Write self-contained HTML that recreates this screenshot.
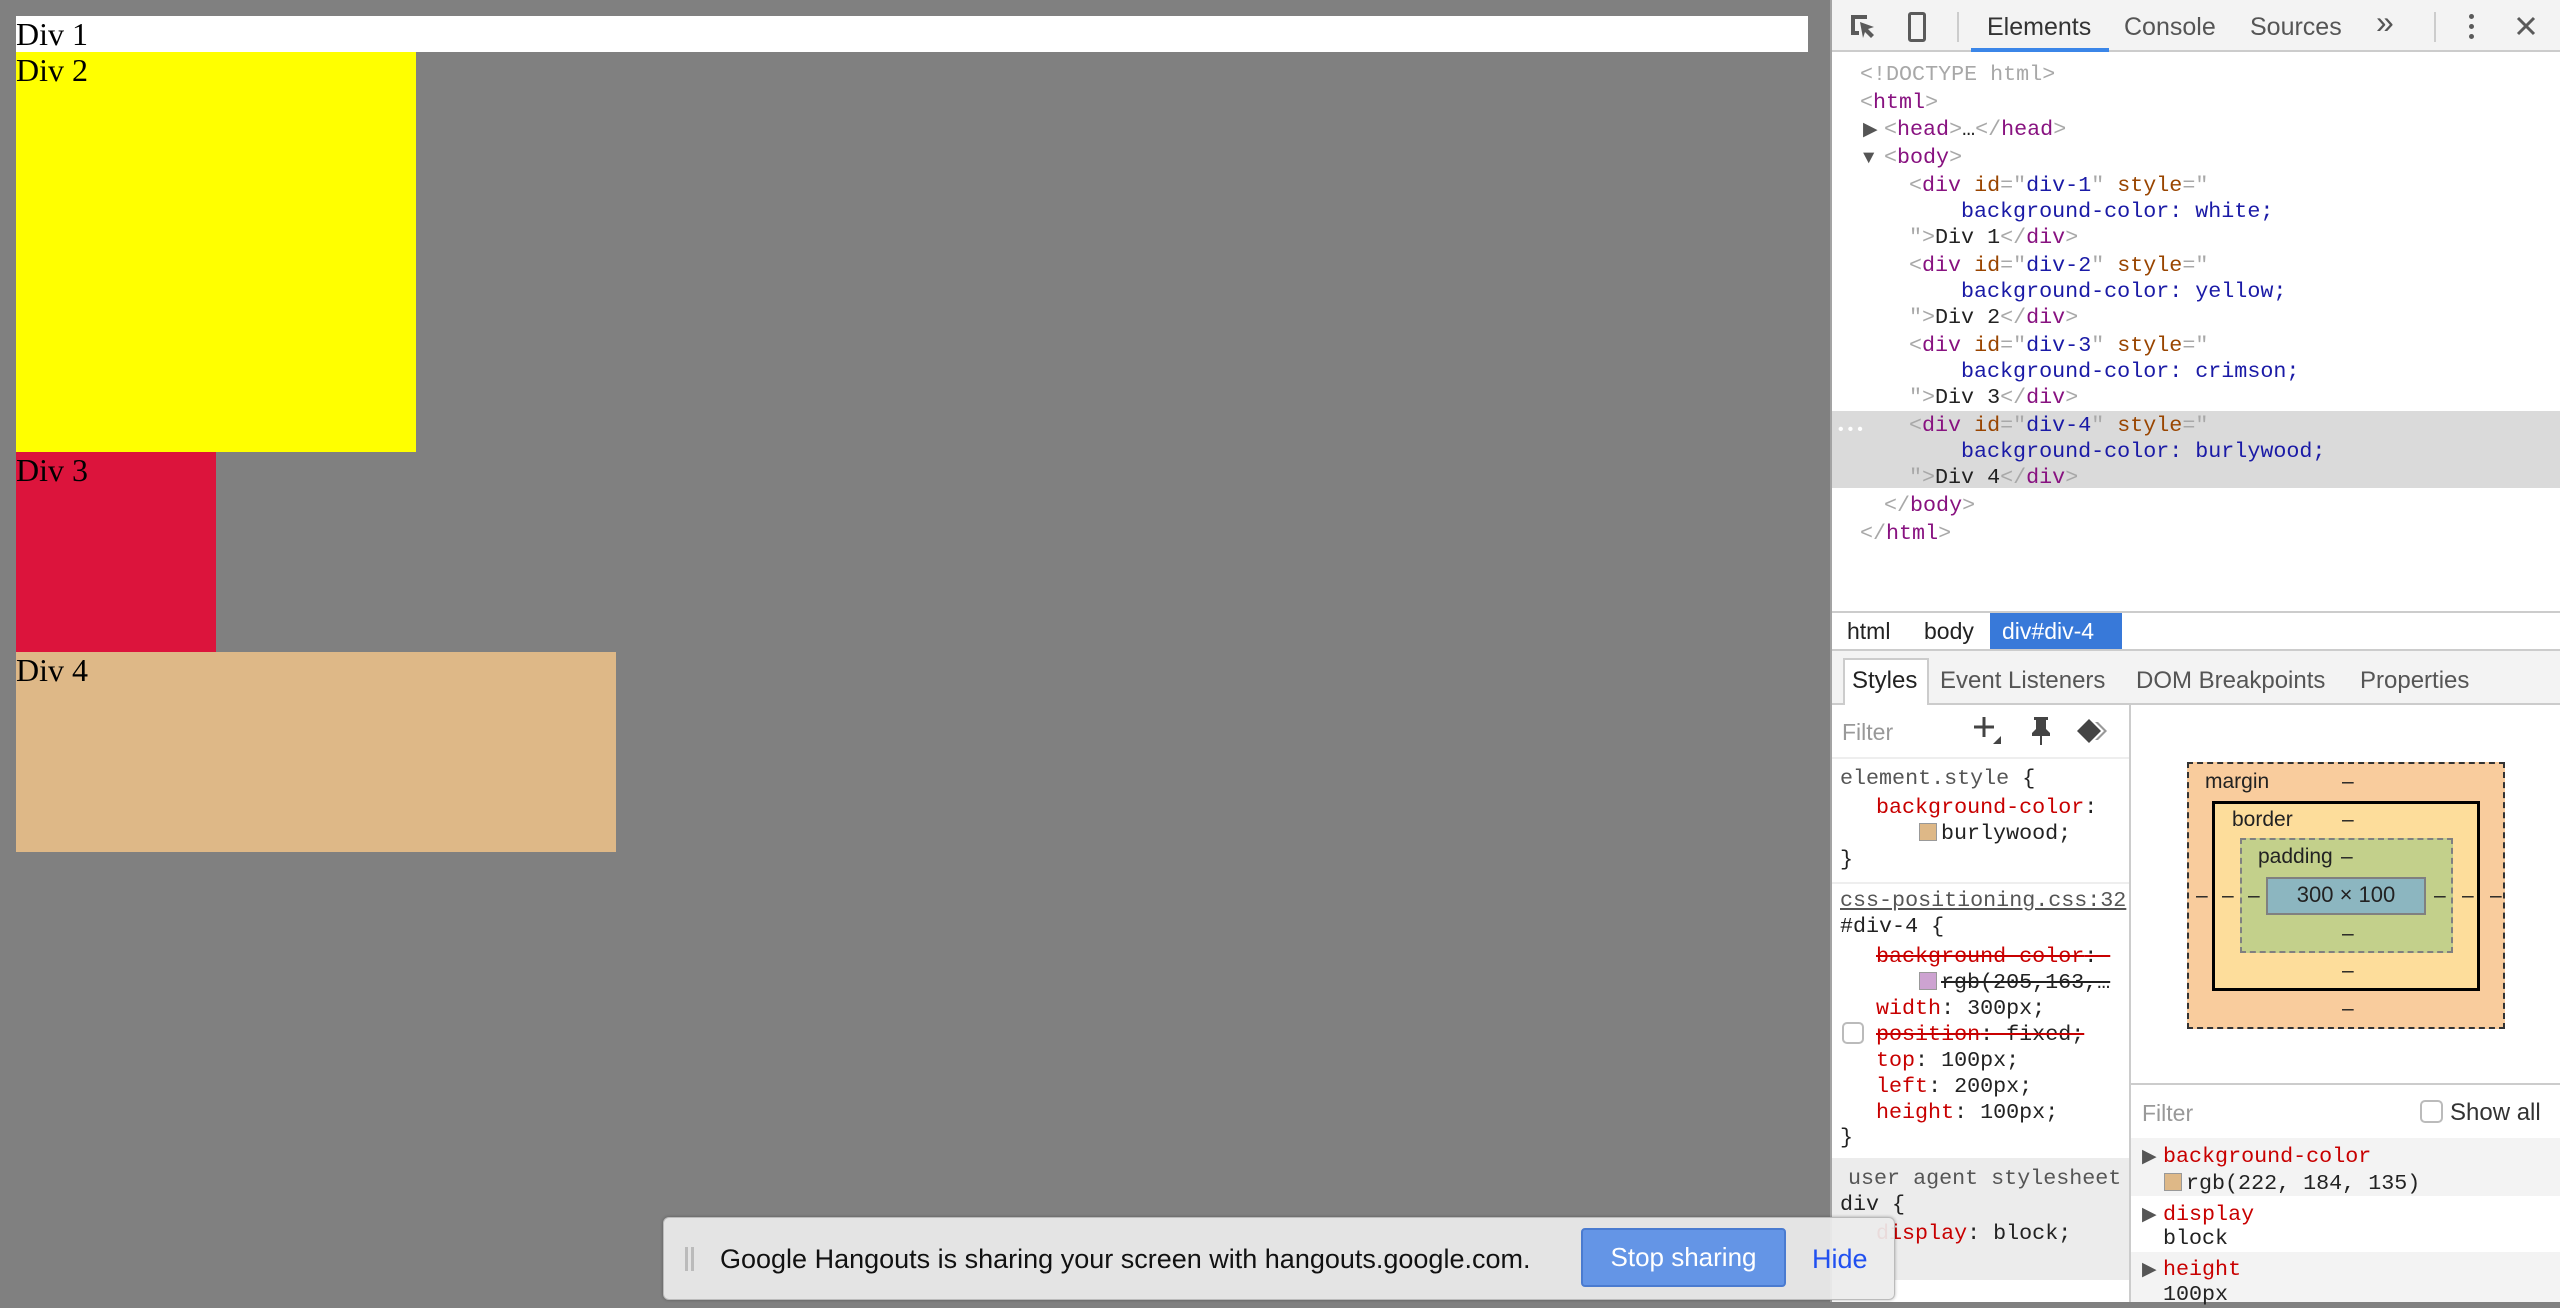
<!DOCTYPE html>
<html><head><style>
*{margin:0;padding:0;box-sizing:border-box}
body{width:2560px;height:1302px;overflow:hidden;background:#808080;position:relative;font-family:"Liberation Sans",sans-serif}
.a{position:absolute;white-space:pre}
.pg{font-family:"Liberation Serif",serif;font-size:32px;line-height:36px;color:#000}
.m{font-family:"Liberation Mono",monospace;font-size:21.7px;line-height:26px;margin-top:3px}
.tg{color:#881280}.at{color:#994500}.av{color:#1a1aa6}.br{color:#a8a8a8}.tx{color:#222}
.pr{color:#c80000}.vl{color:#222}
.s{text-decoration:line-through}
.sw{display:inline-block;width:18px;height:18px;border:1px solid #999;vertical-align:-2px;margin-right:4px}
.ui{font-size:23px;line-height:28px}
.tri{font-size:19px!important}
</style></head><body>
<div class="a pg" style="left:16px;top:16px;width:1792px;height:36px;background:#fff">Div 1</div>
<div class="a pg" style="left:16px;top:52px;width:400px;height:400px;background:#ff0">Div 2</div>
<div class="a pg" style="left:16px;top:452px;width:200px;height:200px;background:#dc143c">Div 3</div>
<div class="a pg" style="left:16px;top:652px;width:600px;height:200px;background:#deb887">Div 4</div>

<div class="a" style="left:1830px;top:0;width:730px;height:1302px;background:#fff;border-left:2px solid #a3a3a3"></div>
<div class="a" style="left:1832px;top:0;width:728px;height:52px;background:#f3f3f3;border-bottom:2px solid #ccc"></div>
<svg class="a" style="left:1848px;top:12px" width="30" height="30" viewBox="0 0 30 30"><path d="M3 3h16v4H7v12h4v4H3z" fill="#5a5a5a"/><path d="M12 10l14 5-6 2 6 6-3 3-6-6-2 6z" fill="#5a5a5a"/></svg>
<div class="a" style="left:1908px;top:12px;width:18px;height:30px;border:3px solid #5a5a5a;border-radius:3px"></div>
<div class="a" style="left:1957px;top:12px;width:2px;height:30px;background:#ccc"></div>
<div class="a ui" style="left:1987px;top:13px;font-size:25px;color:#333">Elements</div>
<div class="a" style="left:1971px;top:48px;width:138px;height:4px;background:#3b86e8"></div>
<div class="a ui" style="left:2124px;top:13px;font-size:25px;color:#555">Console</div>
<div class="a ui" style="left:2250px;top:13px;font-size:25px;color:#555">Sources</div>
<div class="a ui" style="left:2376px;top:8px;font-size:32px;color:#555">»</div>
<div class="a" style="left:2434px;top:12px;width:2px;height:30px;background:#ccc"></div>
<div class="a" style="left:2469px;top:14px;width:5px;height:5px;border-radius:3px;background:#5a5a5a;box-shadow:0 10px 0 #5a5a5a,0 20px 0 #5a5a5a"></div>
<svg class="a" style="left:2516px;top:16px" width="20" height="20" viewBox="0 0 20 20"><path d="M2 2L18 18M18 2L2 18" stroke="#5a5a5a" stroke-width="3"/></svg>

<div class="a" style="left:1832px;top:411px;width:728px;height:77px;background:#dadada"></div>
<div class="a m" style="left:1836px;top:414px;color:#fff;font-size:16px">•••</div>
<div class="a m br" style="left:1860px;top:59px">&lt;!DOCTYPE html&gt;</div>
<div class="a m" style="left:1860px;top:87px"><span class="br">&lt;</span><span class="tg">html</span><span class="br">&gt;</span></div>
<div class="a m tri" style="left:1863px;top:114px;color:#555">▶</div>
<div class="a m" style="left:1884px;top:114px"><span class="br">&lt;</span><span class="tg">head</span><span class="br">&gt;</span><span class="tx">…</span><span class="br">&lt;/</span><span class="tg">head</span><span class="br">&gt;</span></div>
<div class="a m tri" style="left:1863px;top:142px;color:#555">▼</div>
<div class="a m" style="left:1884px;top:142px"><span class="br">&lt;</span><span class="tg">body</span><span class="br">&gt;</span></div>

<div class="a m" style="left:1909px;top:170px"><span class="br">&lt;</span><span class="tg">div</span> <span class="at">id</span><span class="br">="</span><span class="av">div-1</span><span class="br">"</span> <span class="at">style</span><span class="br">="</span></div>
<div class="a m av" style="left:1961px;top:196px">background-color: white;</div>
<div class="a m" style="left:1909px;top:222px"><span class="br">"&gt;</span><span class="tx">Div 1</span><span class="br">&lt;/</span><span class="tg">div</span><span class="br">&gt;</span></div>
<div class="a m" style="left:1909px;top:250px"><span class="br">&lt;</span><span class="tg">div</span> <span class="at">id</span><span class="br">="</span><span class="av">div-2</span><span class="br">"</span> <span class="at">style</span><span class="br">="</span></div>
<div class="a m av" style="left:1961px;top:276px">background-color: yellow;</div>
<div class="a m" style="left:1909px;top:302px"><span class="br">"&gt;</span><span class="tx">Div 2</span><span class="br">&lt;/</span><span class="tg">div</span><span class="br">&gt;</span></div>
<div class="a m" style="left:1909px;top:330px"><span class="br">&lt;</span><span class="tg">div</span> <span class="at">id</span><span class="br">="</span><span class="av">div-3</span><span class="br">"</span> <span class="at">style</span><span class="br">="</span></div>
<div class="a m av" style="left:1961px;top:356px">background-color: crimson;</div>
<div class="a m" style="left:1909px;top:382px"><span class="br">"&gt;</span><span class="tx">Div 3</span><span class="br">&lt;/</span><span class="tg">div</span><span class="br">&gt;</span></div>
<div class="a m" style="left:1909px;top:410px"><span class="br">&lt;</span><span class="tg">div</span> <span class="at">id</span><span class="br">="</span><span class="av">div-4</span><span class="br">"</span> <span class="at">style</span><span class="br">="</span></div>
<div class="a m av" style="left:1961px;top:436px">background-color: burlywood;</div>
<div class="a m" style="left:1909px;top:462px"><span class="br">"&gt;</span><span class="tx">Div 4</span><span class="br">&lt;/</span><span class="tg">div</span><span class="br">&gt;</span></div>
<div class="a m" style="left:1884px;top:490px"><span class="br">&lt;/</span><span class="tg">body</span><span class="br">&gt;</span></div>
<div class="a m" style="left:1860px;top:518px"><span class="br">&lt;/</span><span class="tg">html</span><span class="br">&gt;</span></div>

<div class="a" style="left:1832px;top:611px;width:728px;height:40px;border-top:2px solid #ccc;border-bottom:2px solid #ccc;background:#fff"></div>
<div class="a ui" style="left:1847px;top:617px;color:#222">html</div>
<div class="a ui" style="left:1924px;top:617px;color:#222">body</div>
<div class="a ui" style="left:1990px;top:613px;width:132px;height:36px;background:#3879d9;color:#fff;padding:4px 0 0 12px">div#div-4</div>
<div class="a" style="left:1832px;top:651px;width:728px;height:54px;background:#f3f3f3;border-bottom:2px solid #ccc"></div>
<div class="a" style="left:1843px;top:658px;width:86px;height:47px;background:#fff;border:2px solid #ccc;border-bottom:none"></div>
<div class="a ui" style="left:1852px;top:667px;font-size:24px;color:#222">Styles</div>
<div class="a ui" style="left:1940px;top:667px;font-size:24px;color:#555">Event Listeners</div>
<div class="a ui" style="left:2136px;top:667px;font-size:24px;color:#555">DOM Breakpoints</div>
<div class="a ui" style="left:2360px;top:667px;font-size:24px;color:#555">Properties</div>
<div class="a" style="left:2129px;top:705px;width:2px;height:597px;background:#ccc"></div>
<div class="a ui" style="left:1842px;top:718px;color:#999">Filter</div>
<div class="a" style="left:1832px;top:757px;width:297px;height:2px;background:#eee"></div>
<svg class="a" style="left:1973px;top:716px" width="30" height="30" viewBox="0 0 30 30"><path d="M1 11h20M11 1v20" stroke="#444" stroke-width="3"/><path d="M28 20v8h-8z" fill="#444"/></svg>
<svg class="a" style="left:2029px;top:716px" width="24" height="30" viewBox="0 0 24 30"><path d="M5 1h14v3h-2v9l4 4v3H3v-3l4-4V4H5z M11 20h2v9h-2z" fill="#444"/></svg>
<svg class="a" style="left:2077px;top:718px" width="34" height="26" viewBox="0 0 34 26"><path d="M18 4l9 9-9 9 3 0 9-9-9-9z" fill="#999"/><path d="M12 1l12 12-12 12L0 13z" fill="#444"/></svg>
<div class="a m" style="left:1840px;top:763px;color:#555">element.style <span class="vl">{</span></div>
<div class="a m pr" style="left:1876px;top:792px">background-color<span class="vl">:</span></div>
<div class="a m vl" style="left:1919px;top:818px"><span class="sw" style="background:#deb887"></span>burlywood;</div>
<div class="a m vl" style="left:1840px;top:844px">}</div>
<div class="a" style="left:1832px;top:882px;width:297px;height:2px;background:#eee"></div>
<div class="a m" style="left:1840px;top:885px;width:289px;overflow:hidden;color:#555;text-decoration:underline">css-positioning.css:32</div>
<div class="a m vl" style="left:1840px;top:911px">#div-4 {</div>
<div class="a m pr s" style="left:1876px;top:941px">background-color<span class="vl">: </span></div>
<div class="a m vl s" style="left:1919px;top:967px"><span class="sw" style="background:#cda3d1"></span>rgb(205,163,…</div>
<div class="a m pr" style="left:1876px;top:993px">width<span class="vl">: 300px;</span></div>
<div class="a" style="left:1842px;top:1022px;width:22px;height:22px;border:2px solid #bbb;border-radius:5px;background:#fff"></div>
<div class="a m pr s" style="left:1876px;top:1019px">position<span class="vl">: fixed;</span></div>
<div class="a m pr" style="left:1876px;top:1045px">top<span class="vl">: 100px;</span></div>
<div class="a m pr" style="left:1876px;top:1071px">left<span class="vl">: 200px;</span></div>
<div class="a m pr" style="left:1876px;top:1097px">height<span class="vl">: 100px;</span></div>
<div class="a m vl" style="left:1840px;top:1122px">}</div>
<div class="a" style="left:1832px;top:1158px;width:297px;height:122px;background:#ececec"></div>
<div class="a m" style="left:1848px;top:1163px;color:#555">user agent stylesheet</div>
<div class="a m vl" style="left:1840px;top:1189px">div {</div>
<div class="a m pr" style="left:1876px;top:1218px">display<span class="vl">: block;</span></div>
<div class="a" style="left:2187px;top:762px;width:318px;height:267px;background:#f9cc9d;border:2px dashed #333"></div>
<div class="a" style="left:2212px;top:801px;width:268px;height:190px;background:#fddd9b;border:3px solid #000"></div>
<div class="a" style="left:2240px;top:838px;width:213px;height:115px;background:#c3d08b;border:2px dashed #808080"></div>
<div class="a" style="left:2266px;top:877px;width:160px;height:38px;background:#8cb6c0;border:2px solid #808080"></div>
<div class="a ui" style="left:2205px;top:768px;font-size:21px;color:#222">margin</div>
<div class="a ui" style="left:2232px;top:806px;font-size:21px;color:#222">border</div>
<div class="a ui" style="left:2258px;top:843px;font-size:21px;color:#222">padding</div>
<div class="a ui" style="left:2266px;top:881px;width:160px;text-align:center;font-size:22px;color:#222">300 × 100</div>
<div class="a ui" style="left:2342px;top:768px;font-size:21px;color:#222">–</div>
<div class="a ui" style="left:2342px;top:806px;font-size:21px;color:#222">–</div>
<div class="a ui" style="left:2341px;top:843px;font-size:21px;color:#222">–</div>
<div class="a ui" style="left:2342px;top:920px;font-size:21px;color:#222">–</div>
<div class="a ui" style="left:2342px;top:957px;font-size:21px;color:#222">–</div>
<div class="a ui" style="left:2342px;top:995px;font-size:21px;color:#222">–</div>
<div class="a ui" style="left:2196px;top:882px;font-size:21px;color:#222">–</div>
<div class="a ui" style="left:2222px;top:882px;font-size:21px;color:#222">–</div>
<div class="a ui" style="left:2248px;top:882px;font-size:21px;color:#222">–</div>
<div class="a ui" style="left:2434px;top:882px;font-size:21px;color:#222">–</div>
<div class="a ui" style="left:2462px;top:882px;font-size:21px;color:#222">–</div>
<div class="a ui" style="left:2490px;top:882px;font-size:21px;color:#222">–</div>
<div class="a" style="left:2131px;top:1083px;width:429px;height:2px;background:#ccc"></div>
<div class="a ui" style="left:2142px;top:1099px;color:#999">Filter</div>
<div class="a" style="left:2420px;top:1100px;width:23px;height:23px;border:2px solid #bbb;border-radius:5px;background:#fff"></div>
<div class="a ui" style="left:2450px;top:1099px;color:#333;font-size:24px">Show all</div>
<div class="a" style="left:2131px;top:1138px;width:429px;height:58px;background:#f3f3f3"></div>
<div class="a" style="left:2131px;top:1252px;width:429px;height:50px;background:#f3f3f3"></div>
<div class="a m tri" style="left:2142px;top:1141px;color:#555">▶</div>
<div class="a m pr" style="left:2163px;top:1141px">background-color</div>
<div class="a m vl" style="left:2164px;top:1168px"><span class="sw" style="background:#deb887"></span>rgb(222, 184, 135)</div>
<div class="a m tri" style="left:2142px;top:1199px;color:#555">▶</div>
<div class="a m pr" style="left:2163px;top:1199px">display</div>
<div class="a m vl" style="left:2163px;top:1223px">block</div>
<div class="a m tri" style="left:2142px;top:1254px;color:#555">▶</div>
<div class="a m pr" style="left:2163px;top:1254px">height</div>
<div class="a m vl" style="left:2163px;top:1279px">100px</div>

<div class="a" style="left:663px;top:1217px;width:1232px;height:83px;background:rgba(236,236,236,0.93);border:1px solid #bbb;border-radius:6px;box-shadow:0 0 3px rgba(0,0,0,.3)"></div>
<div class="a" style="left:685px;top:1247px;width:3px;height:24px;background:#bbb;box-shadow:6px 0 0 #bbb"></div>
<div class="a" style="left:720px;top:1242px;font-size:27px;line-height:34px;color:#111">Google Hangouts is sharing your screen with hangouts.google.com.</div>
<div class="a" style="left:1581px;top:1228px;width:205px;height:59px;background:#6495e6;border:2px solid #4a7bd0;border-radius:4px;color:#fff;font-size:26px;line-height:55px;text-align:center">Stop sharing</div>
<div class="a" style="left:1812px;top:1242px;font-size:27px;line-height:34px;color:#2150f0">Hide</div>
</body></html>
